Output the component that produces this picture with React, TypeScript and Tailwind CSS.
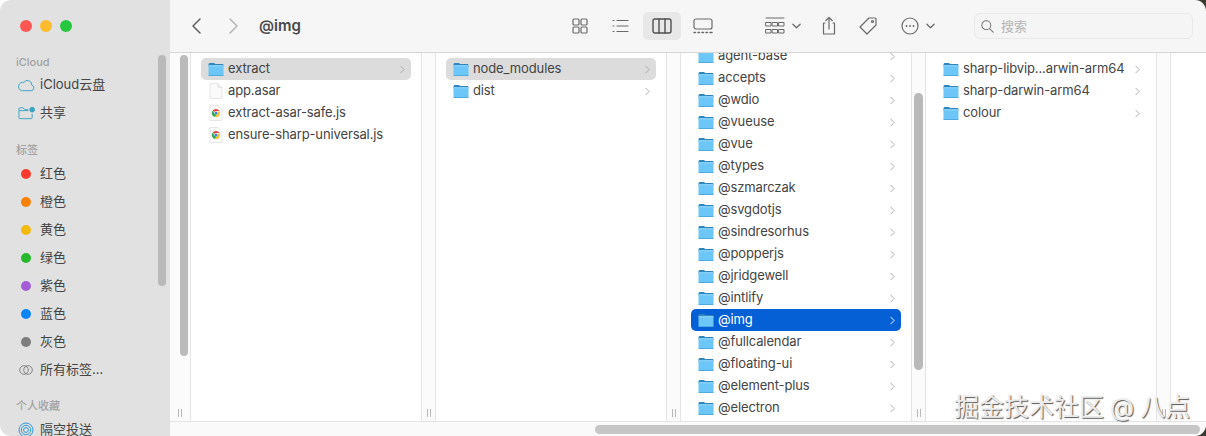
const tags = [
  { name: "红色", color: "bg-[#fb3b30]" },
  { name: "橙色", color: "bg-[#f98006]" },
  { name: "黄色", color: "bg-[#f3b90b]" },
  { name: "绿色", color: "bg-[#28b82c]" },
  { name: "紫色", color: "bg-[#a35cd6]" },
  { name: "蓝色", color: "bg-[#0a84fb]" },
  { name: "灰色", color: "bg-[#7d7d7d]" },
];

const thirdColumn = [
  "agent-base", "accepts", "@wdio", "@vueuse", "@vue", "@types", "@szmarczak", "@svgdotjs", "@sindresorhus",
  "@popperjs", "@jridgewell", "@intlify", "@img", "@fullcalendar", "@floating-ui", "@element-plus", "@electron",
];

function Folder() {
  return (
    <svg viewBox="0 0 16 14" className="h-[15px] w-[16px] shrink-0">
      <path d="M.5 2.2C.5 1.2 1.1.6 2 .6h3.6c.7 0 1 .6 1.6 1h7.2c.8 0 1.1.6 1.1 1.4v1H.5z" fill="#2f86bd" />
      <rect x=".5" y="2.8" width="15" height="10.7" rx="1.3" fill="#6cc6f8" />
      <rect x=".5" y="2.8" width="15" height="1" fill="#98d8fa" />
      <rect x=".5" y="12.6" width="15" height=".9" fill="#4ea9dd" />
    </svg>
  );
}

function FileIcon() {
  return (
    <svg viewBox="0 0 14 16" className="h-[16px] w-[14px] shrink-0">
      <path d="M1 .5h8l4 4v11H1z" fill="#fafafa" stroke="#dedede" strokeWidth=".7" />
      <path d="M9 .5v4h4" fill="#efefef" stroke="#dedede" strokeWidth=".7" />
    </svg>
  );
}

function ChromeFile() {
  return (
    <svg viewBox="0 0 14 16" className="h-[16px] w-[14px] shrink-0">
      <path d="M1 .5h8l4 4v11H1z" fill="#fafafa" stroke="#dedede" strokeWidth=".7" />
      <path d="M7 4a4 4 0 013.5 2H7a2 2 0 00-1.8 1.1L3.7 5.6A4 4 0 017 4z" fill="#e2453a" />
      <path d="M3.7 5.6l1.6 2.9a2 2 0 002.2.9L6 12a4 4 0 01-2.3-6.4z" fill="#2fa84f" />
      <path d="M10.5 6A4 4 0 016 12l1.6-2.6A2 2 0 008.8 7z" fill="#f6c02d" />
      <circle cx="7" cy="8" r="1.5" fill="#3b82e6" />
    </svg>
  );
}

function Chevron({ active }: { active?: boolean }) {
  return (
    <svg viewBox="0 0 6 10" className="h-[9px] w-[5px] shrink-0" fill="none" stroke={active ? "#ffffff" : "#a8a8a8"} strokeWidth="1.1" strokeLinecap="round" strokeLinejoin="round">
      <path d="M1 1l4 4-4 4" />
    </svg>
  );
}

function Row({ name, state, icon, arrow = true }: { name: string; state?: "gray" | "blue"; icon?: React.ReactNode; arrow?: boolean }) {
  const bg = state === "gray" ? "bg-[#dcdcdc] text-[#444444]" : state === "blue" ? "bg-[#0560d6] text-white" : "text-[#444444]";
  return (
    <div className={`flex h-[22px] items-center rounded-[5px] pl-[7px] pr-[6px] ${bg}`}>
      <div className="flex w-[16px] justify-center">{icon ?? <Folder />}</div>
      <span className="ml-[4px] flex-1 truncate tracking-[-0.12px]">{name}</span>
      {arrow && <Chevron active={state === "blue"} />}
    </div>
  );
}

function Gutter({ width, children }: { width: string; children?: React.ReactNode }) {
  return (
    <div className={`relative flex shrink-0 flex-col items-center justify-end border-r border-[#e4e4e4] bg-[#fbfbfb] pb-[4px] ${width}`}>
      {children}
      <div className="flex h-[8px] gap-[2px]">
        <div className="w-px bg-[#b8b8b8]" />
        <div className="w-px bg-[#b8b8b8]" />
      </div>
    </div>
  );
}

function Column({ children, scrolled }: { children: React.ReactNode; scrolled?: boolean }) {
  return (
    <div className="w-[231px] shrink-0 overflow-hidden border-r border-[#e4e4e4] bg-white px-[10px]">
      <div className={scrolled ? "-mt-[8px]" : "mt-[5px]"}>{children}</div>
    </div>
  );
}

function Heading({ text, className }: { text: string; className: string }) {
  return <div className={`flex h-[20px] shrink-0 items-center pl-[16px] text-[11px] font-medium text-[#a2a2a2] ${className}`}>{text}</div>;
}

function SideRow({ icon, text }: { icon: React.ReactNode; text: string }) {
  return (
    <div className="flex h-[28px] shrink-0 items-center text-[13px] text-[#444444]">
      <div className="flex w-[40px] justify-center pl-[12px]">
        <div className="flex w-[28px] justify-center">{icon}</div>
      </div>
      <span className="truncate">{text}</span>
    </div>
  );
}

function ToolIcon({ children, w = "w-[20px]" }: { children: React.ReactNode; w?: string }) {
  return (
    <svg viewBox="0 0 20 20" className={`h-[20px] shrink-0 ${w}`} fill="none" stroke="#6a6a6a" strokeWidth="1.2" strokeLinecap="round" strokeLinejoin="round">
      {children}
    </svg>
  );
}

function SmallDown() {
  return (
    <svg viewBox="0 0 10 6" className="h-[6px] w-[9px] shrink-0" fill="none" stroke="#6a6a6a" strokeWidth="1.4" strokeLinecap="round" strokeLinejoin="round">
      <path d="M1 1l4 4 4-4" />
    </svg>
  );
}

export default function App() {
  return (
    <div className="h-[436px] w-[1206px] overflow-hidden bg-[linear-gradient(90deg,#ffffff_50%,#3a3a2e_50%)] [font-family:Inter,'Noto_Sans_CJK_SC',sans-serif]">
      <div className="relative flex h-full overflow-hidden rounded-[11px]">
        {/* sidebar */}
        <aside className="relative flex w-[170px] shrink-0 flex-col overflow-hidden bg-[#e1e1e1]">
          <div className="flex h-[52px] shrink-0 items-center gap-[8px] pl-[20px]">
            <div className="h-[12px] w-[12px] rounded-full bg-[#fc5753]" />
            <div className="h-[12px] w-[12px] rounded-full bg-[#fdbc2e]" />
            <div className="h-[12px] w-[12px] rounded-full bg-[#27c63f]" />
          </div>
          <Heading text="iCloud" className="mb-[-1px]" />
          <SideRow
            text="iCloud云盘"
            icon={
              <svg viewBox="0 0 18 13" className="h-[13px] w-[17px]" fill="none" stroke="#3aa2c4" strokeWidth="1">
                <path d="M4 12h10a3 3 0 00.6-5.9A4.6 4.6 0 006.2 3.2 4.4 4.4 0 004 12z" />
              </svg>
            }
          />
          <SideRow
            text="共享"
            icon={
              <svg viewBox="0 0 18 14" className="h-[14px] w-[17px]" fill="none" stroke="#3aa2c4" strokeWidth="1">
                <path d="M1 4.5V12a1 1 0 001 1h12a1 1 0 001-1V8M1 4.5V2.5a1 1 0 011-1h3.5l1.5 2H11M1 4.5h10" />
                <circle cx="15" cy="3.5" r="2.5" fill="#3aa2c4" />
              </svg>
            }
          />
          <Heading text="标签" className="mt-[13px]" />
          {tags.map((t) => (
            <SideRow key={t.name} text={t.name} icon={<div className={`h-[10px] w-[10px] rounded-full ${t.color}`} />} />
          ))}
          <SideRow
            text="所有标签..."
            icon={
              <svg viewBox="0 0 14 10" className="h-[10px] w-[14px]" fill="none" stroke="#7a7a7a" strokeWidth=".9">
                <circle cx="5" cy="5" r="4.3" />
                <circle cx="9" cy="5" r="4.3" />
              </svg>
            }
          />
          <Heading text="个人收藏" className="mt-[12px]" />
          <SideRow
            text="隔空投送"
            icon={
              <svg viewBox="0 0 16 16" className="h-[16px] w-[16px]" fill="none" stroke="#2f97d6" strokeWidth="1">
                <circle cx="8" cy="8" r="7" />
                <circle cx="8" cy="8" r="4.7" />
                <circle cx="8" cy="8" r="2.4" />
              </svg>
            }
          />
          <div className="absolute left-[158px] top-[55px] h-[231px] w-[8px] rounded-full bg-[#b9b9b9]" />
        </aside>

        <main className="flex min-w-0 flex-1 flex-col">
          {/* toolbar */}
          <header className="flex h-[53px] shrink-0 items-center border-b border-[#d6d6d6] bg-[#f6f6f6]">
            <svg viewBox="0 0 18 18" className="ml-[18px] h-[18px] w-[18px]" fill="none" stroke="#5f5f5f" strokeWidth="1.5" strokeLinecap="round" strokeLinejoin="round">
              <path d="M12 2L5 9l7 7" />
            </svg>
            <svg viewBox="0 0 18 18" className="ml-[18px] h-[18px] w-[18px]" fill="none" stroke="#b4b4b4" strokeWidth="1.5" strokeLinecap="round" strokeLinejoin="round">
              <path d="M6 2l7 7-7 7" />
            </svg>
            <span className="ml-[17px] flex-1 pt-[1px] text-[15px] font-semibold text-[#4a4a4a]">@img</span>

            <div className="flex items-center gap-[3px]">
              <div className="flex h-[28px] w-[38px] items-center justify-center">
                <ToolIcon>
                  <rect x="3" y="3" width="6" height="6" rx="1" />
                  <rect x="11" y="3" width="6" height="6" rx="1" />
                  <rect x="3" y="11" width="6" height="6" rx="1" />
                  <rect x="11" y="11" width="6" height="6" rx="1" />
                </ToolIcon>
              </div>
              <div className="flex h-[28px] w-[38px] items-center justify-center">
                <ToolIcon>
                  <path d="M6 4.5h11M6 10h11M6 15.5h11M2 4.5h1M2 10h1M2 15.5h1" />
                </ToolIcon>
              </div>
              <div className="flex h-[28px] w-[38px] items-center justify-center rounded-[5px] bg-[#e8e8e8]">
                <ToolIcon>
                  <rect x="1" y="3" width="18" height="14" rx="2" strokeWidth="1.4" stroke="#505050" />
                  <path d="M7 3v14M13 3v14" strokeWidth="1.4" stroke="#505050" />
                </ToolIcon>
              </div>
              <div className="flex h-[28px] w-[38px] items-center justify-center">
                <ToolIcon>
                  <rect x="1" y="3" width="18" height="10" rx="2" />
                  <path d="M1 16.5h1.5M5 16.5h1.5M9 16.5h1.5M13 16.5h1.5M17 16.5h2" strokeWidth="1.5" />
                </ToolIcon>
              </div>
            </div>

            <div className="ml-[43px] flex items-center gap-[7px]">
              <ToolIcon>
                <path d="M1 2h18M1 6.500h5v3.500H1zM7.500 6.500h5v3.500h-5zM14 6.500h5v3.500h-5zM1 13.500h5v3.500H1zM7.500 13.500h5v3.500h-5zM14 13.500h5v3.500h-5z" strokeWidth="1" />
              </ToolIcon>
              <SmallDown />
            </div>
            <div className="ml-[18px]">
              <ToolIcon>
                <path d="M6 7H4.500v11h11V7H14M10 13V1.500M6.800 4.500L10 1.500l3.200 3" />
              </ToolIcon>
            </div>
            <div className="ml-[19px]">
              <ToolIcon>
                <path d="M11 2h6a1 1 0 011 1v6l-9 9-7-7z" />
                <circle cx="14.500" cy="5.500" r="1" />
              </ToolIcon>
            </div>
            <div className="ml-[22px] flex items-center gap-[6px]">
              <ToolIcon>
                <circle cx="10" cy="10" r="8" />
                <path d="M6.500 10h.01M10 10h.01M13.500 10h.01" strokeWidth="1.8" />
              </ToolIcon>
              <SmallDown />
            </div>

            <div className="ml-[39px] mr-[13px] flex h-[26px] w-[219px] items-center gap-[7px] rounded-[6px] border border-[#e9e9e9] bg-[#f5f5f5] pl-[6px] pt-[1px]">
              <svg viewBox="0 0 16 16" className="h-[13px] w-[13px]" fill="none" stroke="#7c7c7c" strokeWidth="1.3" strokeLinecap="round">
                <circle cx="6.500" cy="6.500" r="5.500" />
                <path d="M10.500 10.500l4.500 4.500" />
              </svg>
              <span className="text-[13px] text-[#b4b4b4]">搜索</span>
            </div>
          </header>

          {/* columns */}
          <div className="flex min-h-0 flex-1 overflow-hidden bg-[#fbfbfb] text-[13px]">
            <Gutter width="w-[21px]">
              <div className="absolute left-[10px] top-[2px] h-[301px] w-[8px] rounded-full bg-[#bbbbbb]" />
            </Gutter>
            <Column>
              <Row name="extract" state="gray" />
              <Row name="app.asar" icon={<FileIcon />} arrow={false} />
              <Row name="extract-asar-safe.js" icon={<ChromeFile />} arrow={false} />
              <Row name="ensure-sharp-universal.js" icon={<ChromeFile />} arrow={false} />
            </Column>
            <Gutter width="w-[14px]" />
            <Column>
              <Row name="node_modules" state="gray" />
              <Row name="dist" />
            </Column>
            <Gutter width="w-[14px]" />
            <Column scrolled>
              {thirdColumn.map((n) => (
                <Row key={n} name={n} state={n === "@img" ? "blue" : undefined} />
              ))}
            </Column>
            <Gutter width="w-[14px]">
              <div className="absolute left-[2px] top-[40px] h-[277px] w-[9px] rounded-full bg-[#b9b9b9]" />
            </Gutter>
            <Column>
              <Row name="sharp-libvip...arwin-arm64" />
              <Row name="sharp-darwin-arm64" />
              <Row name="colour" />
            </Column>
            <Gutter width="w-[14px]" />
            <div className="flex-1 bg-white" />
          </div>

          {/* horizontal scroll */}
          <div className="flex h-[15px] shrink-0 items-center justify-end border-t border-[#e4e4e4] bg-[#fafafa] pr-[6px]">
            <div className="h-[9px] w-[605px] rounded-full bg-[#c6c6c6]" />
          </div>
        </main>

        <div className="absolute left-[954px] top-[390px] whitespace-nowrap text-[25px] leading-[34px] text-[#ececec] [word-spacing:-1px] [text-shadow:1px_1px_1px_#555555]">
          掘金技术社区 @ 八点
        </div>
      </div>
    </div>
  );
}
